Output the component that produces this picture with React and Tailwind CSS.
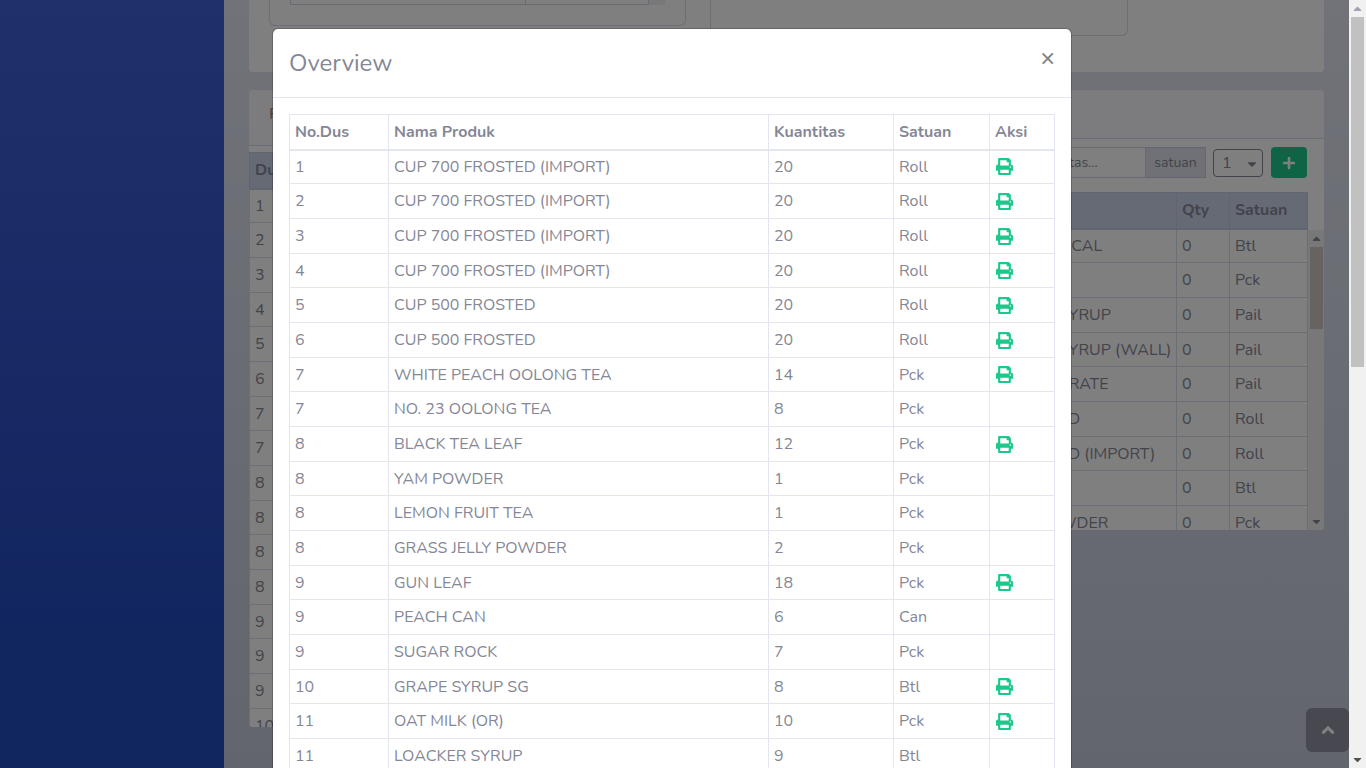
import React from 'react';
import { FaAngleUp, FaCaretDown, FaCaretUp, FaPlus, FaPrint } from 'react-icons/fa';

const boxes = [
    { no: 1, name: 'CUP 700 FROSTED (IMPORT)', qty: 20, unit: 'Roll', print: true },
    { no: 2, name: 'CUP 700 FROSTED (IMPORT)', qty: 20, unit: 'Roll', print: true },
    { no: 3, name: 'CUP 700 FROSTED (IMPORT)', qty: 20, unit: 'Roll', print: true },
    { no: 4, name: 'CUP 700 FROSTED (IMPORT)', qty: 20, unit: 'Roll', print: true },
    { no: 5, name: 'CUP 500 FROSTED', qty: 20, unit: 'Roll', print: true },
    { no: 6, name: 'CUP 500 FROSTED', qty: 20, unit: 'Roll', print: true },
    { no: 7, name: 'WHITE PEACH OOLONG TEA', qty: 14, unit: 'Pck', print: true },
    { no: 7, name: 'NO. 23 OOLONG TEA', qty: 8, unit: 'Pck' },
    { no: 8, name: 'BLACK TEA LEAF', qty: 12, unit: 'Pck', print: true },
    { no: 8, name: 'YAM POWDER', qty: 1, unit: 'Pck' },
    { no: 8, name: 'LEMON FRUIT TEA', qty: 1, unit: 'Pck' },
    { no: 8, name: 'GRASS JELLY POWDER', qty: 2, unit: 'Pck' },
    { no: 9, name: 'GUN LEAF', qty: 18, unit: 'Pck', print: true },
    { no: 9, name: 'PEACH CAN', qty: 6, unit: 'Can' },
    { no: 9, name: 'SUGAR ROCK', qty: 7, unit: 'Pck' },
    { no: 10, name: 'GRAPE SYRUP SG', qty: 8, unit: 'Btl', print: true },
    { no: 11, name: 'OAT MILK (OR)', qty: 10, unit: 'Pck', print: true },
    { no: 11, name: 'LOACKER SYRUP', qty: 9, unit: 'Btl' },
];

const stock = [
    { name: 'OCAL', qty: 0, unit: 'Btl' },
    { name: '', qty: 0, unit: 'Pck' },
    { name: 'SYRUP', qty: 0, unit: 'Pail' },
    { name: 'SYRUP (WALL)', qty: 0, unit: 'Pail' },
    { name: 'TRATE', qty: 0, unit: 'Pail' },
    { name: 'ED', qty: 0, unit: 'Roll' },
    { name: 'ED (IMPORT)', qty: 0, unit: 'Roll' },
    { name: '', qty: 0, unit: 'Btl' },
    { name: 'WDER', qty: 0, unit: 'Pck' },
];

const cell = 'border border-[#e3e6f0] px-[5px] py-0';
const headCell = 'border border-b-2 border-[#e3e6f0] px-[5px] py-0 font-bold';
const backCell = 'border border-[#d8dcec] px-[5px] py-0';
const backHead = 'border border-b-2 border-[#c3cae2] bg-[#cdd4ea] px-[5px] py-0 font-bold';
const row = 'h-[35px] [&:nth-child(3n+1)]:h-[34px]';

const TopCard = () => (
    <section className="flex items-start gap-6 rounded-b bg-white px-5 pb-9">
        <div className="w-[417px] rounded-b-md border border-t-0 border-[#d8dcec] px-5 pb-5">
            <div className="flex h-[5px]">
                <div className="w-[236px] border border-t-0 border-[#d1d3e2]"></div>
                <div className="w-[123px] border-r border-b border-[#d1d3e2]"></div>
                <div className="w-4 bg-[#f1f1f1]"></div>
            </div>
        </div>
        <div className="h-9 w-[418px] rounded-b-md border border-t-0 border-[#d8dcec]"></div>
    </section>
);

const BoxCard = () => (
    <section className="flex-1 overflow-hidden rounded bg-white">
        <h2 className="flex h-14 items-center border-b border-[#d8dcec] bg-[#f8f9fc] px-5 pb-2">Produk</h2>
        <div className="mt-[6px] max-h-[575px] overflow-hidden">
            <table className="w-full border-collapse text-left">
                <thead>
                    <tr className="h-9"><th scope="col" className={backHead}>Dus</th></tr>
                </thead>
                <tbody>
                    {boxes.slice(0, 16).map((item, index) => (
                        <tr className={row} key={index}>
                            <td className={backCell}>{item.no}</td>
                        </tr>
                    ))}
                </tbody>
            </table>
        </div>
    </section>
);

const StockCard = () => (
    <section className="flex-1 overflow-hidden rounded bg-white">
        <div className="h-[49px] border-b border-[#d8dcec] bg-[#f8f9fc]"></div>
        <form className="flex items-center justify-end pt-2 pr-[17px] pb-[14px]" onSubmit={(e) => e.preventDefault()}>
            <div className="flex h-[31px] text-sm">
                <input
                    type="text"
                    aria-label="Kuantitas"
                    placeholder="Kuantitas..."
                    className="w-[130px] border border-[#d1d3e2] bg-white px-3 placeholder:text-[#858796]"
                />
                <span className="flex w-[60px] items-center justify-center border border-l-0 border-[#c6cce0] bg-[#dfe3ee]">satuan</span>
            </div>
            <div className="relative ml-[7px]">
                <select aria-label="Dus" className="h-7 w-[50px] appearance-none rounded border border-[#858796] bg-white pl-2">
                    <option>1</option>
                </select>
                <FaCaretDown className="pointer-events-none absolute top-2 right-1 size-[14px]" />
            </div>
            <button type="submit" aria-label="Tambah" className="ml-2 flex h-[31px] w-9 items-center justify-center rounded bg-[#1cc88a] text-white">
                <FaPlus className="size-[14px]" />
            </button>
        </form>
        <div className="flex">
            <div className="max-h-[338px] flex-1 overflow-hidden">
                <table className="w-full table-fixed border-collapse text-left whitespace-nowrap">
                    <colgroup>
                        <col />
                        <col className="w-[123px]" />
                        <col className="w-[53px]" />
                        <col className="w-[78px]" />
                    </colgroup>
                    <thead>
                        <tr className="h-9">
                            <th className={backHead}></th>
                            <th className={backHead}></th>
                            <th scope="col" className={backHead}>Qty</th>
                            <th scope="col" className={backHead}>Satuan</th>
                        </tr>
                    </thead>
                    <tbody>
                        {stock.map((item, index) => (
                            <tr className={row} key={index}>
                                <td className={backCell}></td>
                                <td className={backCell}>{item.name}</td>
                                <td className={backCell}>{item.qty}</td>
                                <td className={backCell}>{item.unit}</td>
                            </tr>
                        ))}
                    </tbody>
                </table>
            </div>
            <div className="mt-[38px] flex w-4 flex-col items-center bg-[#f1f1f1]">
                <FaCaretUp className="my-[2px] size-[13px]" />
                <div className="h-[82px] w-[13px] bg-[#ccc6c1]"></div>
                <FaCaretDown className="mt-auto mb-[2px] size-[13px]" />
            </div>
        </div>
    </section>
);

const OverviewModal = () => (
    <div className="absolute inset-0 flex items-start justify-center overflow-hidden bg-black/50 pt-7 pr-[5px]">
        <div role="dialog" aria-labelledby="overview-title" className="w-full max-w-[800px] rounded-md border border-black/20 bg-white bg-clip-padding">
            <div className="flex items-start justify-between border-b border-[#e3e6f0] p-4">
                <h1 id="overview-title" className="text-2xl leading-9">Overview</h1>
                <button type="button" aria-label="Close" className="text-2xl leading-6 font-semibold text-[#808085]">×</button>
            </div>
            <div className="p-4">
                <table className="w-full table-fixed border-collapse text-left">
                    <colgroup>
                        <col className="w-[99px]" />
                        <col />
                        <col className="w-[125px]" />
                        <col className="w-24" />
                        <col className="w-[65px]" />
                    </colgroup>
                    <thead>
                        <tr className="h-[35px]">
                            <th scope="col" className={headCell}>No.Dus</th>
                            <th scope="col" className={headCell}>Nama Produk</th>
                            <th scope="col" className={headCell}>Kuantitas</th>
                            <th scope="col" className={headCell}>Satuan</th>
                            <th scope="col" className={headCell}>Aksi</th>
                        </tr>
                    </thead>
                    <tbody>
                        {boxes.map((item, index) => (
                            <tr className={row} key={index}>
                                <td className={cell}>{item.no}</td>
                                <td className={cell}>{item.name}</td>
                                <td className={cell}>{item.qty}</td>
                                <td className={cell}>{item.unit}</td>
                                <td className={cell}>
                                    {item.print &&
                                        <a href="#print" aria-label="Print" className="flex h-6 items-center px-px text-[#1cc88a]">
                                            <FaPrint className="size-[17px]" />
                                        </a>
                                    }
                                </td>
                            </tr>
                        ))}
                    </tbody>
                </table>
            </div>
        </div>
    </div>
);

const App = () => (
    <div className="flex h-screen overflow-hidden font-['Nunito','Lato',sans-serif] text-base text-[#858796]">
        <div className="relative flex flex-1 overflow-hidden">
            <aside className="w-56 shrink-0 bg-linear-to-b from-[#4060d6] to-[#224abe] to-85%"></aside>
            <main className="flex-1 bg-linear-to-b from-[#e2e6f2] to-[#c6cbdb] px-[25px]">
                <TopCard />
                <div className="mt-[18px] flex items-start gap-6">
                    <BoxCard />
                    <StockCard />
                </div>
            </main>
            <a href="#top" aria-label="Scroll to top" className="absolute right-0 bottom-4 flex h-11 w-[43px] items-center justify-center rounded-md bg-[#9193a0] text-white">
                <FaAngleUp className="size-5" />
            </a>
            <OverviewModal />
        </div>
        <div className="flex w-[17px] flex-col items-center bg-[#f1f1f1]">
            <FaCaretUp className="my-[2px] size-[13px] text-[#a3a3b0]" />
            <div className="h-[350px] w-[13px] bg-[#c1c1c1]"></div>
            <FaCaretDown className="mt-auto mb-[2px] size-[13px] text-[#505050]" />
        </div>
    </div>
);

export default App;
